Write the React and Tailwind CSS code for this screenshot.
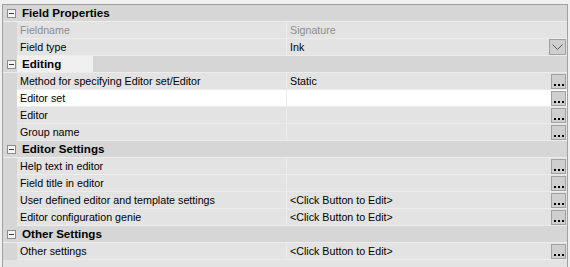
const ROWS = [
  { cat: 'Field Properties' },
  { name: 'Fieldname', value: 'Signature', muted: true },
  { name: 'Field type', value: 'Ink', btn: 'drop' },
  { cat: 'Editing', focus: true },
  { name: 'Method for specifying Editor set/Editor', value: 'Static', btn: 'dots' },
  { name: 'Editor set', value: '', btn: 'dots', selected: true },
  { name: 'Editor', value: '', btn: 'dots' },
  { name: 'Group name', value: '', btn: 'dots' },
  { cat: 'Editor Settings' },
  { name: 'Help text in editor', value: '', btn: 'dots' },
  { name: 'Field title in editor', value: '', btn: 'dots' },
  { name: 'User defined editor and template settings', value: '<Click Button to Edit>', btn: 'dots' },
  { name: 'Editor configuration genie', value: '<Click Button to Edit>', btn: 'dots' },
  { cat: 'Other Settings' },
  { name: 'Other settings', value: '<Click Button to Edit>', btn: 'dots' },
]

function Minus() {
  return (
    <div className="w-[9px] h-[9px] border border-[#8c8c8c] bg-[#f4f4f4] flex items-center justify-center">
      <div className="w-[5px] h-px bg-[#3c3c3c]" />
    </div>
  )
}

function Dots() {
  return (
    <div className="w-[15px] h-[15px] border border-[#a0a0a0] bg-[#cfcfcf] flex items-end justify-center gap-[2px] pb-[2px]">
      <span className="w-[2px] h-[2px] bg-black" />
      <span className="w-[2px] h-[2px] bg-black" />
      <span className="w-[2px] h-[2px] bg-black" />
    </div>
  )
}

function Drop() {
  return (
    <div className="w-[17px] h-[16px] border border-[#a0a0a0] bg-[#cfcfcf] flex items-center justify-center">
      <svg width="11" height="6" viewBox="0 0 11 6">
        <path d="M0.5 0.5 L5.5 5.5 L10.5 0.5" fill="none" stroke="#606060" strokeWidth="1" />
      </svg>
    </div>
  )
}

export default function App() {
  return (
    <div className="w-[570px] h-[267px] bg-[#f0f0f0] pt-[4px] pl-[2px] pr-[2px] overflow-hidden"
      style={{ fontFamily: '"Liberation Sans", Arial, sans-serif' }}>
      <div className="border-t border-l border-r border-[#a0a0a0] bg-[#e3e3e3] h-[270px]">
        {ROWS.map((r, i) => r.cat ? (
          <div key={i} className="flex h-[17px] bg-[#d6d6d6] border-b border-[#ececec]">
            <div className="w-[14px] flex items-center justify-end pr-[1px]">
              <Minus />
            </div>
            <div className={`flex items-center pl-[5px] pr-[4px] text-[11.6px] font-bold text-black ${r.focus ? 'bg-[#f0f0f0] w-[76px]' : ''}`}>
              {r.cat}
            </div>
          </div>
        ) : (
          <div key={i} className="flex h-[17px]">
            <div className="w-[14px] bg-[#d6d6d6]" />
            <div className={`flex flex-1 border-b border-[#ececec] ${r.selected ? 'bg-white' : ''}`}>
              <div className={`w-[269px] flex items-center pl-[3px] text-[10.7px] whitespace-nowrap overflow-hidden ${r.muted ? 'text-[#8d8d8d]' : 'text-black'}`}>
                {r.name}
              </div>
              <div className="w-px bg-[#ececec]" />
              <div className="flex-1 flex items-center justify-between pl-[3px] pr-[1px]">
                <span className={`text-[10.7px] whitespace-nowrap ${r.muted ? 'text-[#8d8d8d]' : 'text-black'}`}>{r.value}</span>
                {r.btn === 'dots' && <Dots />}
                {r.btn === 'drop' && <Drop />}
              </div>
            </div>
          </div>
        ))}
      </div>
    </div>
  )
}
